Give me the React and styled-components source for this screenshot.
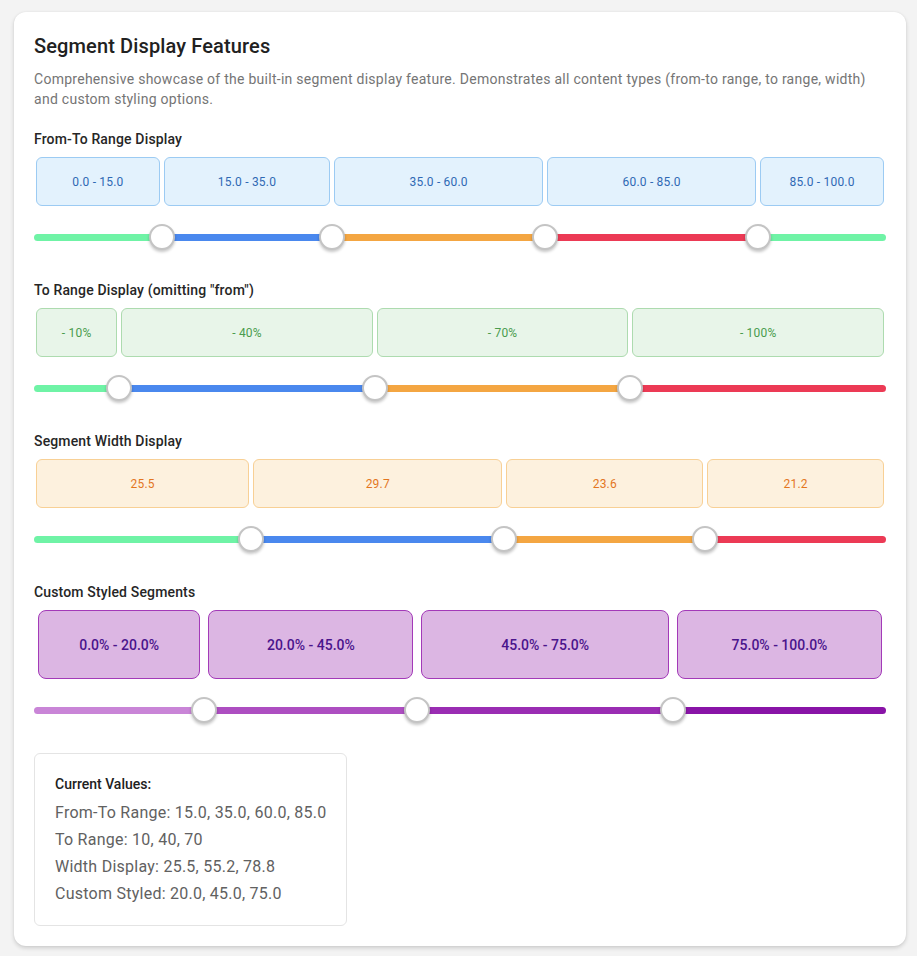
import React from "react";
import styled, { createGlobalStyle } from "styled-components";

const GlobalStyle = createGlobalStyle`
  body {
    margin: 0;
    background: #f3f3f3;
    font-family: Roboto, "Liberation Sans", Arial, sans-serif;
  }
  * { box-sizing: border-box; }
`;

const palette = {
  green: "#6ff3a6",
  blue: "#4a88ee",
  orange: "#f4a642",
  red: "#ec3a55",
};

const variants = {
  blue: { bg: "#e3f2fd", border: "#9ccbf3", color: "#2f69b4" },
  green: { bg: "#e8f5e9", border: "#addbaf", color: "#4a9c4e" },
  orange: { bg: "#fdf1de", border: "#f8d095", color: "#e3761e" },
  purple: { bg: "#dcb6e3", border: "#a33ab8", color: "#4a148c" },
};

const sections = [
  {
    label: "From-To Range Display",
    variant: "blue",
    values: [15, 35, 60, 85],
    colors: [palette.green, palette.blue, palette.orange, palette.red, palette.green],
    text: (from, to) => `${from.toFixed(1)} - ${to.toFixed(1)}`,
  },
  {
    label: 'To Range Display (omitting "from")',
    variant: "green",
    values: [10, 40, 70],
    colors: [palette.green, palette.blue, palette.orange, palette.red],
    text: (from, to) => `- ${to}%`,
  },
  {
    label: "Segment Width Display",
    variant: "orange",
    values: [25.5, 55.2, 78.8],
    colors: [palette.green, palette.blue, palette.orange, palette.red],
    text: (from, to) => (to - from).toFixed(1),
  },
  {
    label: "Custom Styled Segments",
    variant: "purple",
    custom: true,
    values: [20, 45, 75],
    colors: ["#c985d7", "#ad4ec1", "#9a2db3", "#8914a7"],
    text: (from, to) => `${from.toFixed(1)}% - ${to.toFixed(1)}%`,
  },
];

const SegmentDisplay = ({ section }) => {
  const stops = [0, ...section.values, 100];
  const segments = stops.slice(0, -1).map((from, i) => ({ from, to: stops[i + 1] }));
  return (
    <Section>
      <Label>{section.label}</Label>
      <SegmentRow $custom={section.custom}>
        {segments.map((s, i) => (
          <SegmentBox
            key={i}
            $custom={section.custom}
            style={{ width: `${s.to - s.from}%` }}
          >
            <SegmentInner $variant={section.variant} $custom={section.custom}>
              {section.text(s.from, s.to)}
            </SegmentInner>
          </SegmentBox>
        ))}
      </SegmentRow>
      <Slider>
        <Track>
          {segments.map((s, i) => (
            <TrackPiece
              key={i}
              style={{ width: `${s.to - s.from}%`, background: section.colors[i] }}
            />
          ))}
        </Track>
        {section.values.map((v, i) => (
          <Thumb key={i} style={{ left: `${v}%` }} />
        ))}
      </Slider>
    </Section>
  );
};

const App = () => {
  return (
    <Page>
      <GlobalStyle />
      <Card>
        <Title>Segment Display Features</Title>
        <Description>
          Comprehensive showcase of the built-in segment display feature. Demonstrates all
          content types (from-to range, to range, width) and custom styling options.
        </Description>
        {sections.map((s) => (
          <SegmentDisplay key={s.label} section={s} />
        ))}
        <ValuesBox>
          <ValuesTitle>Current Values:</ValuesTitle>
          <ValueLine>From-To Range: 15.0, 35.0, 60.0, 85.0</ValueLine>
          <ValueLine>To Range: 10, 40, 70</ValueLine>
          <ValueLine>Width Display: 25.5, 55.2, 78.8</ValueLine>
          <ValueLine>Custom Styled: 20.0, 45.0, 75.0</ValueLine>
        </ValuesBox>
      </Card>
    </Page>
  );
};

export default App;

const Page = styled.div`
  padding: 12px 11px 9px 14px;
`;

const Card = styled.div`
  background: #ffffff;
  border-radius: 12px;
  padding: 20px;
  box-shadow: 0 2px 4px rgba(0, 0, 0, 0.16), 0 0 2px rgba(0, 0, 0, 0.06);
`;

const Title = styled.h2`
  margin: 0 0 9px;
  font-size: 20px;
  line-height: 28px;
  font-weight: 500;
  letter-spacing: 0.13px;
  color: #212121;
`;

const Description = styled.p`
  margin: 0 0 20px;
  font-size: 14px;
  line-height: 20px;
  letter-spacing: 0.27px;
  color: #757575;
`;

const Section = styled.div`
  margin-bottom: 30px;
`;

const Label = styled.div`
  font-size: 14px;
  line-height: 20px;
  font-weight: 500;
  letter-spacing: 0.15px;
  color: #262626;
  margin-bottom: 8px;
`;

const SegmentRow = styled.div`
  display: flex;
  height: ${(p) => (p.$custom ? "69px" : "49px")};
`;

const SegmentBox = styled.div`
  padding: 0 ${(p) => (p.$custom ? "4px" : "2px")};
  height: 100%;
`;

const SegmentInner = styled.div`
  height: 100%;
  display: flex;
  align-items: center;
  justify-content: center;
  background: ${(p) => variants[p.$variant].bg};
  border: 1px solid ${(p) => variants[p.$variant].border};
  color: ${(p) => variants[p.$variant].color};
  border-radius: ${(p) => (p.$custom ? "8px" : "6px")};
  font-size: ${(p) => (p.$custom ? "14px" : "12px")};
  font-weight: ${(p) => (p.$custom ? 500 : 400)};
  letter-spacing: ${(p) => (p.$custom ? "0" : "0.2px")};
  white-space: nowrap;
`;

const Slider = styled.div`
  position: relative;
  height: 26px;
  margin-top: 18px;
  display: flex;
  align-items: center;
`;

const Track = styled.div`
  display: flex;
  width: 100%;
  height: 7px;
  border-radius: 4px;
  overflow: hidden;
`;

const TrackPiece = styled.div`
  height: 100%;
`;

const Thumb = styled.div`
  position: absolute;
  top: 0;
  width: 26px;
  height: 26px;
  margin-left: -13px;
  border-radius: 50%;
  background: #ffffff;
  border: 2px solid #c4c4c4;
  box-shadow: 0 2px 3px rgba(0, 0, 0, 0.22);
`;

const ValuesBox = styled.div`
  display: inline-block;
  border: 1px solid #e4e4e4;
  border-radius: 6px;
  padding: 20px 20px 18px;
`;

const ValuesTitle = styled.div`
  font-size: 14px;
  line-height: 20px;
  font-weight: 500;
  color: #212121;
  margin-bottom: 5px;
`;

const ValueLine = styled.div`
  font-size: 16px;
  line-height: 27px;
  letter-spacing: 0.25px;
  color: #616161;
`;
